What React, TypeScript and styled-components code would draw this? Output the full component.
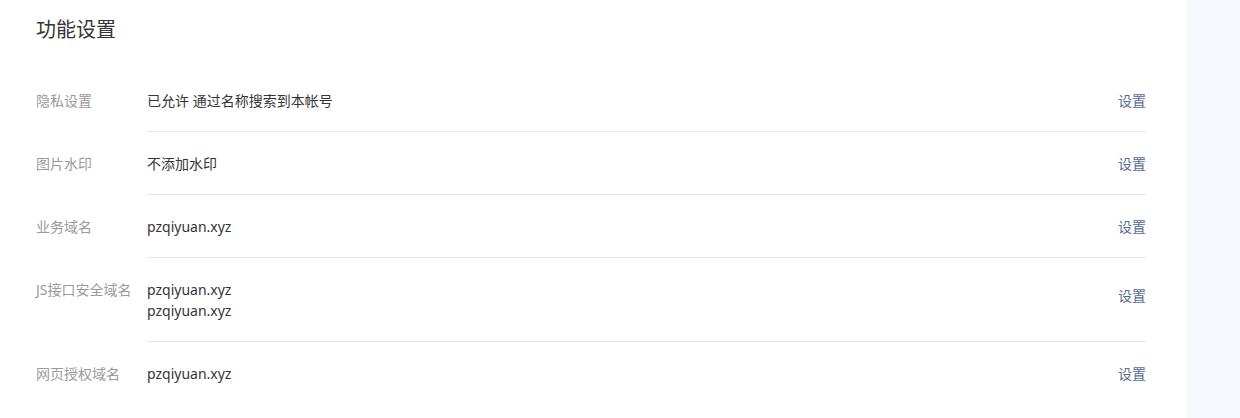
import React from "react";
import styled, { createGlobalStyle } from "styled-components";

const Global = createGlobalStyle`
  html, body {
    margin: 0;
    padding: 0;
    background: #f6f8fd;
  }
  body {
    font-family: "Noto Sans", "Noto Sans CJK SC", sans-serif;
    font-size: 14px;
    color: #353535;
  }
`;

const Page = styled.div`
  display: flex;
  width: 1240px;
  height: 418px;
  overflow: hidden;
`;

const Panel = styled.section`
  width: 1187px;
  box-sizing: border-box;
  background: #ffffff;
  padding: 16px 41px 0 36px;
`;

const Title = styled.h2`
  margin: 0 0 25px;
  font-size: 20px;
  line-height: 28px;
  font-weight: 400;
  color: #353535;
`;

const Row = styled.div`
  display: flex;
`;

const Label = styled.div`
  width: 111px;
  flex: none;
  padding-top: 21px;
  line-height: 21px;
  color: #9a9a9a;
  white-space: nowrap;
`;

const Body = styled.div<{ $last?: boolean }>`
  flex: 1;
  display: flex;
  align-items: center;
  padding: 21px 0 20px;
  border-bottom: ${(p) => (p.$last ? "none" : "1px solid #e7e7eb")};
`;

const Value = styled.div`
  flex: 1;
  line-height: 21px;
  color: #353535;
`;

const Line = styled.div``;

const Link = styled.a<{ $lift?: boolean }>`
  flex: none;
  line-height: 21px;
  color: #576b95;
  text-decoration: none;
  cursor: pointer;
  margin-bottom: ${(p) => (p.$lift ? "10px" : "0")};
`;

const rows: { label: string; values: string[] }[] = [
  { label: "隐私设置", values: ["已允许 通过名称搜索到本帐号"] },
  { label: "图片水印", values: ["不添加水印"] },
  { label: "业务域名", values: ["pzqiyuan.xyz"] },
  { label: "JS接口安全域名", values: ["pzqiyuan.xyz", "pzqiyuan.xyz"] },
  { label: "网页授权域名", values: ["pzqiyuan.xyz"] },
];

export default function App() {
  return (
    <>
      <Global />
      <Page>
        <Panel>
          <Title>功能设置</Title>
          {rows.map((r, i) => (
            <Row key={r.label}>
              <Label>{r.label}</Label>
              <Body $last={i === rows.length - 1}>
                <Value>
                  {r.values.map((v, j) => (
                    <Line key={j}>{v}</Line>
                  ))}
                </Value>
                <Link $lift={r.values.length > 1}>设置</Link>
              </Body>
            </Row>
          ))}
        </Panel>
      </Page>
    </>
  );
}
